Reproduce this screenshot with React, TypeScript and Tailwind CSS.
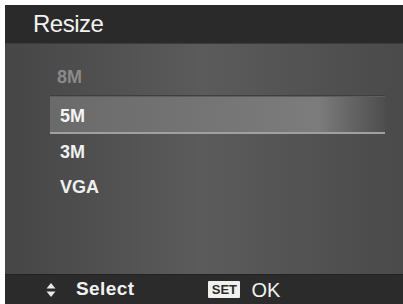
import React from 'react';

const items = ['8M', '5M', '3M', 'VGA'];

const UpDown: React.FC = () => (
  <svg width="10" height="16" viewBox="0 0 10 16" className="shrink-0">
    <path d="M5 1 L9.5 6.5 H0.5 Z" fill="#e8e8e8" />
    <path d="M5 15 L9.5 9.5 H0.5 Z" fill="#e8e8e8" />
  </svg>
);

const App: React.FC = () => {
  return (
    <div className="w-[403px] h-[304px] bg-white pl-[5px] pt-[5px] overflow-hidden">
      <div
        className="w-[398px] h-[299px] flex flex-col text-white"
        style={{ fontFamily: '"Liberation Sans", Arial, sans-serif' }}
      >
        {/* title bar */}
        <div className="h-[38px] shrink-0 bg-[#2a2a2a] pl-[28px] flex items-center">
          <span className="text-[24px] leading-none tracking-[-0.5px] text-[#f2f2f2]">Resize</span>
        </div>

        {/* list body */}
        <div className="flex-1 bg-gradient-to-r from-[#464646] via-[#5b5b5b] to-[#4a4a4a] pt-[16px] pl-[45px] pr-[18px] border-t border-[#3c3c3c]">
          <div className="flex flex-col">
            <div className="h-[36px] flex items-center pl-[7px] border-b border-[#3f3f3f] text-[18px] font-bold text-[#8a8a8a]">
              {items[0]}
            </div>
            <div className="h-[38px] flex items-center pt-[4px] pl-[10px] bg-gradient-to-r from-[#6a6a6a] via-[#7c7c7c] via-80% to-[#4e4e4e] border-t border-[#5e5e5e] border-b-2 border-b-[#a0a0a0] text-[18px] font-bold text-[#f4f4f4]">
              {items[1]}
            </div>
            <div className="h-[37px] flex items-center pl-[10px] text-[18px] font-bold text-[#f0f0f0]">
              {items[2]}
            </div>
            <div className="h-[33px] flex items-center pl-[10px] text-[18px] font-bold text-[#f0f0f0]">
              {items[3]}
            </div>
          </div>
        </div>

        {/* bottom bar */}
        <div className="h-[30px] shrink-0 bg-[#2b2b2b] border-t border-[#222] flex items-center text-[19px] font-bold text-[#f2f2f2]">
          <div className="ml-[41px]">
            <UpDown />
          </div>
          <span className="ml-[20px] tracking-[0.4px]">Select</span>
          <span className="ml-[74px] h-[17px] w-[32px] flex items-center justify-center bg-[#f0f0f0] text-[#2b2b2b] text-[13px] font-bold leading-none rounded-[1px]">
            SET
          </span>
          <span className="ml-[11px] text-[20px] font-normal">OK</span>
        </div>
      </div>
    </div>
  );
};

export default App;
